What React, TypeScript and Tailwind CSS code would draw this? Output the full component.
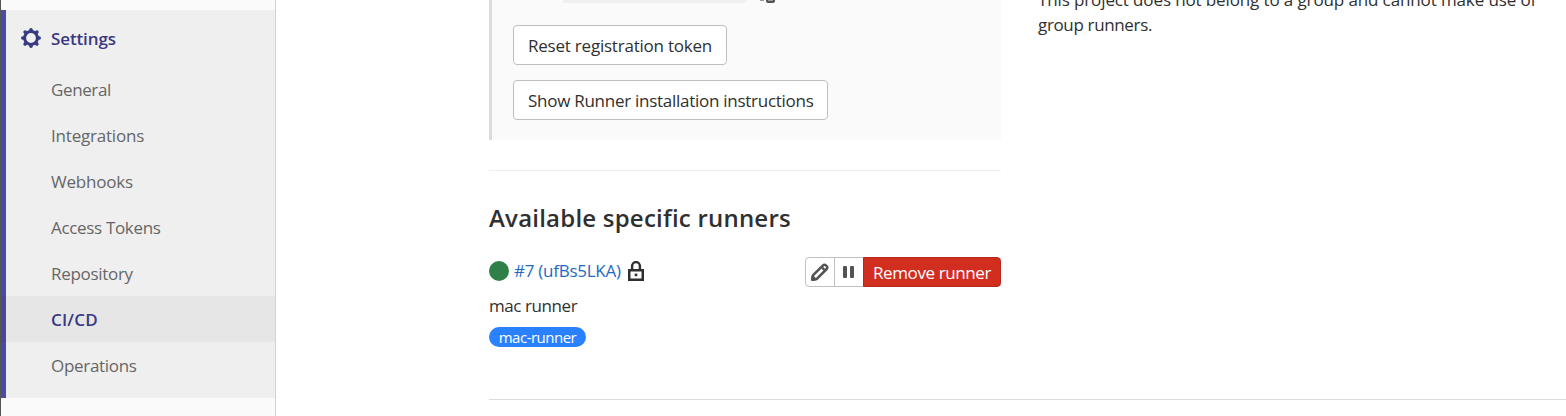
import React from 'react';

const items = [
  { label: 'General', tracking: 'tracking-[-0.38px]' },
  { label: 'Integrations', tracking: 'tracking-[-0.2px]' },
  { label: 'Webhooks', tracking: 'tracking-[-0.22px]' },
  { label: 'Access Tokens', tracking: 'tracking-[-0.33px]' },
  { label: 'Repository', tracking: 'tracking-[-0.3px]' },
  { label: 'CI/CD', tracking: 'tracking-[0.2px]', active: true },
  { label: 'Operations', tracking: 'tracking-[-0.3px]' },
];

function GearIcon() {
  return (
    <svg className="h-5 w-5 shrink-0" viewBox="0 0 20 20" fill="none" stroke="currentColor">
      <circle cx="10" cy="10" r="6.4" strokeWidth="3" />
      <g strokeWidth="3.6" strokeLinecap="round">
        <path d="M10 1.8v1.4M10 16.8v1.4M1.8 10h1.4M16.8 10h1.4" />
        <path d="M4.1 4.1l.7.7M15.2 15.2l.7.7M4.1 15.9l.7-.7M15.2 4.8l.7-.7" />
      </g>
    </svg>
  );
}

function LockIcon() {
  return (
    <svg className="ml-[7px] h-5 w-4 shrink-0" viewBox="0 0 16 20" fill="none">
      <path d="M4.1 9V5a3.9 3.9 0 0 1 7.8 0v4" stroke="#303030" strokeWidth="2.4" />
      <path d="M1.25 9.15h13.5v9.6H1.25z" stroke="#303030" strokeWidth="2.5" />
      <path d="M6.7 12.6h2.6v2.6H6.7z" fill="#303030" />
    </svg>
  );
}

function PencilIcon() {
  return (
    <svg className="h-5 w-5" viewBox="0 0 20 20" fill="none" stroke="#535353" strokeWidth="2.5" strokeLinejoin="round">
      <path d="M2.3 17.7l.6-4.3L13 3.3a2 2 0 0 1 2.9 0l.8.8a2 2 0 0 1 0 2.9L6.6 17.1z" />
      <path d="M12.2 5.6l2.2 2.2M2.3 17.7l3-.4-2.6-2.6z" />
    </svg>
  );
}

export default function App() {
  return (
    <div className="flex h-[416px] w-[1566px] overflow-hidden bg-white font-['Open_Sans','Noto_Sans',sans-serif] text-[17px] leading-[25px] text-[#303030]">
      <aside className="flex w-[276px] shrink-0 flex-col border-l border-r border-l-[#555] border-r-[#d2d2d2] bg-[#fafafa] pt-[10px]">
        <nav className="h-[388px] border-l-[5px] border-[#4b4ba3] bg-[#efefef]">
          <div className="flex h-[56px] items-center gap-[10px] pl-[15px] text-[#393982]">
            <GearIcon />
            <span className="font-semibold tracking-[-0.12px]">Settings</span>
          </div>
          <ul>
            {items.map((item) => (
              <li
                key={item.label}
                className={
                  item.active
                    ? '-ml-[5px] flex h-[46px] items-center border-l-[5px] border-[#484896] bg-[#e6e6e6] pl-[45px] font-semibold text-[#393982]'
                    : 'flex h-[46px] items-center pl-[45px] text-[#666]'
                }
              >
                <span className={item.tracking}>{item.label}</span>
              </li>
            ))}
          </ul>
        </nav>
      </aside>

      <main className="ml-[213px] flex w-[1077px] shrink-0 flex-col">
        <div className="box-content flex h-[399px] border-b border-[#dbdbdb]">
          <section className="w-[512px] shrink-0">
            <div className="h-[140px] border-l-[3px] border-[#dbdbdb] bg-[#fafafa] pl-[21px]">
              <div className="flex h-[25px] items-start pl-[50px]">
                <div className="h-[3px] w-[183px] rounded-b bg-[#efefef]" />
                <svg className="ml-[14px] h-1 w-4" viewBox="0 0 16 4" fill="none">
                  <path d="M0 .5h4" stroke="#999" strokeWidth="1" />
                  <path d="M7 0v1a1 1 0 0 0 1 1h5a1 1 0 0 0 1-1V0" stroke="#535353" strokeWidth="2" />
                  <path d="M8 .4h5" stroke="#777" strokeWidth=".8" />
                </svg>
              </div>
              <button className="flex h-10 w-[214px] items-center rounded border border-[#bfbfbf] bg-white pl-[14px] whitespace-nowrap">
                <span className="tracking-[-0.22px]">Reset registration token</span>
              </button>
              <button className="mt-[15px] flex h-10 w-[315px] items-center rounded border border-[#bfbfbf] bg-white pl-[14px] whitespace-nowrap">
                <span className="tracking-[-0.27px]">Show Runner installation instructions</span>
              </button>
            </div>
            <hr className="mt-[30px] border-[#efefef]" />
            <h4 className="mt-[32px] h-[30px] text-[24px] leading-[30px] font-semibold whitespace-nowrap">
              <span className="tracking-[0.22px]">Available specific runners</span>
            </h4>
            <div className="mt-[24px] flex h-[30px] justify-between">
              <div className="flex h-7 items-center">
                <span className="h-5 w-5 rounded-full bg-[#2f8048]" />
                <a className="mb-[2px] ml-[5px] w-[107px] whitespace-nowrap text-[#1f6ac4]">
                  <span className="tracking-[-0.26px]">#7 (ufBs5LKA)</span>
                </a>
                <LockIcon />
              </div>
              <div className="flex h-[30px]">
                <button className="flex w-[30px] items-center justify-center rounded-l border border-[#bfbfbf]">
                  <PencilIcon />
                </button>
                <button className="flex w-[28px] items-center justify-center gap-[3px] border-y border-[#bfbfbf] pr-px">
                  <span className="h-3 w-[4px] rounded-[1px] bg-[#535353]" />
                  <span className="h-3 w-[4px] rounded-[1px] bg-[#535353]" />
                </button>
                <button className="flex w-[138px] items-center justify-center rounded-r border border-[#b8281a] bg-[#d22e20] whitespace-nowrap text-white">
                  <span className="tracking-[-0.4px]">Remove runner</span>
                </button>
              </div>
            </div>
            <div className="mt-[6px] h-[26px] leading-[26px]">
              <span className="tracking-[-0.42px]">mac runner</span>
            </div>
            <div className="mt-[8px] flex h-5 w-[97px] items-center justify-center rounded-full bg-[#2a81ff] text-[15px] leading-5 whitespace-nowrap text-white">
              <span className="tracking-[-0.5px]">mac-runner</span>
            </div>
          </section>
          <section className="-mt-[13px] ml-[37px] w-[510px] leading-[25px] whitespace-nowrap">
            <p><span className="tracking-[-0.12px]">This project does not belong to a group and cannot make use of</span></p>
            <p><span className="tracking-[-0.35px]">group runners.</span></p>
          </section>
        </div>
      </main>
    </div>
  );
}
